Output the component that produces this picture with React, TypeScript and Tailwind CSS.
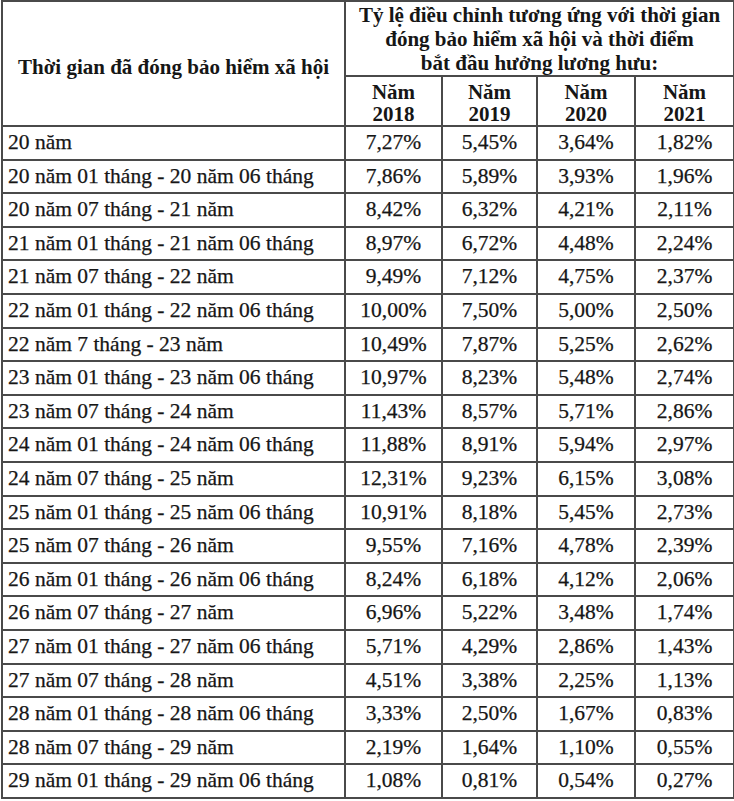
import React from "react";

const rows: [string, string, string, string, string][] = [
  ["20 năm", "7,27%", "5,45%", "3,64%", "1,82%"],
  ["20 năm 01 tháng - 20 năm 06 tháng", "7,86%", "5,89%", "3,93%", "1,96%"],
  ["20 năm 07 tháng - 21 năm", "8,42%", "6,32%", "4,21%", "2,11%"],
  ["21 năm 01 tháng - 21 năm 06 tháng", "8,97%", "6,72%", "4,48%", "2,24%"],
  ["21 năm 07 tháng - 22 năm", "9,49%", "7,12%", "4,75%", "2,37%"],
  ["22 năm 01 tháng - 22 năm 06 tháng", "10,00%", "7,50%", "5,00%", "2,50%"],
  ["22 năm 7 tháng - 23 năm", "10,49%", "7,87%", "5,25%", "2,62%"],
  ["23 năm 01 tháng - 23 năm 06 tháng", "10,97%", "8,23%", "5,48%", "2,74%"],
  ["23 năm 07 tháng - 24 năm", "11,43%", "8,57%", "5,71%", "2,86%"],
  ["24 năm 01 tháng - 24 năm 06 tháng", "11,88%", "8,91%", "5,94%", "2,97%"],
  ["24 năm 07 tháng - 25 năm", "12,31%", "9,23%", "6,15%", "3,08%"],
  ["25 năm 01 tháng - 25 năm 06 tháng", "10,91%", "8,18%", "5,45%", "2,73%"],
  ["25 năm 07 tháng - 26 năm", "9,55%", "7,16%", "4,78%", "2,39%"],
  ["26 năm 01 tháng - 26 năm 06 tháng", "8,24%", "6,18%", "4,12%", "2,06%"],
  ["26 năm 07 tháng - 27 năm", "6,96%", "5,22%", "3,48%", "1,74%"],
  ["27 năm 01 tháng - 27 năm 06 tháng", "5,71%", "4,29%", "2,86%", "1,43%"],
  ["27 năm 07 tháng - 28 năm", "4,51%", "3,38%", "2,25%", "1,13%"],
  ["28 năm 01 tháng - 28 năm 06 tháng", "3,33%", "2,50%", "1,67%", "0,83%"],
  ["28 năm 07 tháng - 29 năm", "2,19%", "1,64%", "1,10%", "0,55%"],
  ["29 năm 01 tháng - 29 năm 06 tháng", "1,08%", "0,81%", "0,54%", "0,27%"],
];

const years = ["2018", "2019", "2020", "2021"];

const cell = "border-2 border-[#4a4a4a]";

export default function App() {
  return (
    <div className="bg-white w-[734px] h-[801px] overflow-hidden pl-[1px] font-['Liberation_Serif','Times_New_Roman',serif] text-[#161616]">
      <table className="border-collapse table-fixed w-[732px]">
        <colgroup>
          <col className="w-[343px]" />
          <col className="w-[97px]" />
          <col className="w-[95px]" />
          <col className="w-[98px]" />
          <col className="w-[99px]" />
        </colgroup>
        <thead>
          <tr className="h-[75px]">
            <th
              rowSpan={2}
              className={`${cell} text-[21px] font-bold text-center align-middle pt-[8px]`}
            >
              Thời gian đã đóng bảo hiểm xã hội
            </th>
            <th
              colSpan={4}
              className={`${cell} text-[21px] font-bold leading-[24px] text-center align-middle`}
            >
              Tỷ lệ điều chỉnh tương ứng với thời gian
              <br />
              đóng bảo hiểm xã hội và thời điểm
              <br />
              bắt đầu hưởng lương hưu:
            </th>
          </tr>
          <tr className="h-[50px]">
            {years.map((y) => (
              <th
                key={y}
                className={`${cell} text-[21px] font-bold leading-[22px] text-center align-middle pt-[3px]`}
              >
                Năm
                <br />
                {y}
              </th>
            ))}
          </tr>
        </thead>
        <tbody className="[-webkit-text-stroke:0.25px_#161616]">
          {rows.map((r) => (
            <tr key={r[0]} className="h-[33.6px]">
              <td className={`${cell} text-[21.5px] leading-none pl-[5px] whitespace-nowrap`}>
                {r[0]}
              </td>
              {r.slice(1).map((v, i) => (
                <td
                  key={i}
                  className={`${cell} text-[21.5px] leading-none text-center`}
                >
                  {v}
                </td>
              ))}
            </tr>
          ))}
        </tbody>
      </table>
    </div>
  );
}
